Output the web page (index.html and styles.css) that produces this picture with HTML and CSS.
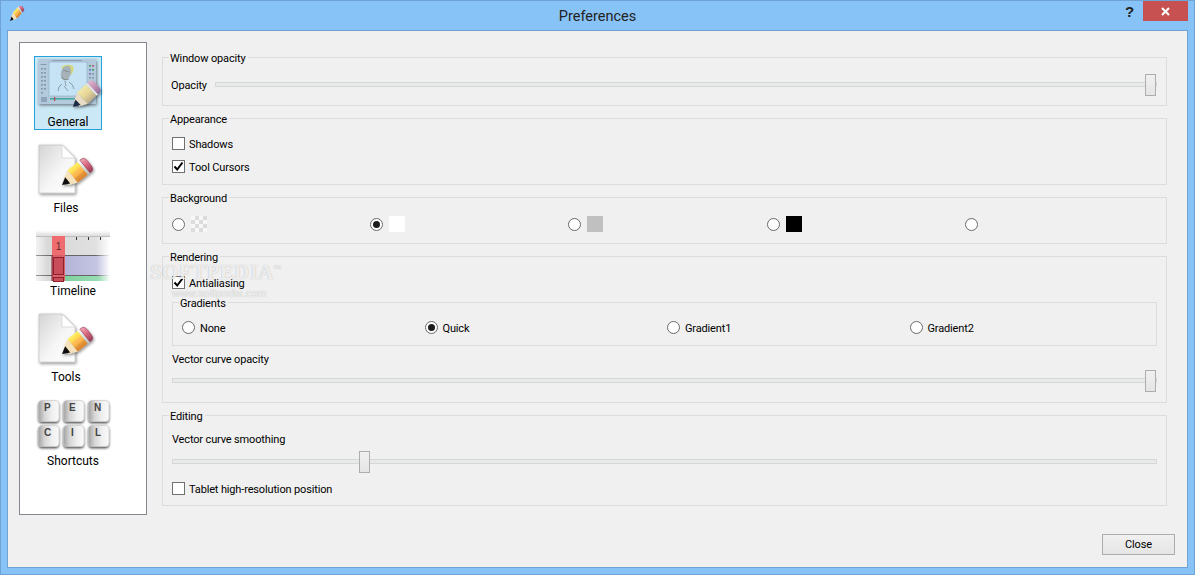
FILE: index.html
```html
<!DOCTYPE html>
<html lang="en">
<head>
<meta charset="utf-8">
<title>Preferences</title>
<link rel="stylesheet" href="styles.css">
</head>
<body>
<svg class="defs" aria-hidden="true">
  <defs>
    <linearGradient id="body" x1="0" y1="0" x2="0" y2="1">
      <stop offset="0" stop-color="#fff06a"/><stop offset=".33" stop-color="#ffd84a"/>
      <stop offset=".36" stop-color="#ffc45c"/><stop offset=".66" stop-color="#f9ae45"/>
      <stop offset=".69" stop-color="#e99a3c"/><stop offset="1" stop-color="#d9822c"/>
    </linearGradient>
    <linearGradient id="bodyPale" x1="0" y1="0" x2="0" y2="1">
      <stop offset="0" stop-color="#efe9a8"/><stop offset=".5" stop-color="#e6d596"/><stop offset="1" stop-color="#b9ab8a"/>
    </linearGradient>
    <linearGradient id="eraser" x1="0" y1="0" x2="0" y2="1">
      <stop offset="0" stop-color="#f0a8b8"/><stop offset=".5" stop-color="#d9667e"/><stop offset="1" stop-color="#983c56"/>
    </linearGradient>
    <linearGradient id="eraserPale" x1="0" y1="0" x2="0" y2="1">
      <stop offset="0" stop-color="#e0b4cc"/><stop offset=".5" stop-color="#c491b4"/><stop offset="1" stop-color="#8d6f97"/>
    </linearGradient>
    <linearGradient id="metal" x1="0" y1="0" x2="0" y2="1">
      <stop offset="0" stop-color="#fff"/><stop offset="1" stop-color="#bbb"/>
    </linearGradient>
    <linearGradient id="paper" x1="0" y1="0" x2="1" y2="1">
      <stop offset="0" stop-color="#d4d4d4"/><stop offset=".55" stop-color="#f6f6f6"/><stop offset="1" stop-color="#fff"/>
    </linearGradient>
    <linearGradient id="keyface" x1="0" y1="0" x2="1" y2="0">
      <stop offset="0" stop-color="#a2a2a2"/><stop offset=".3" stop-color="#d6d6d6"/><stop offset=".65" stop-color="#efefef"/><stop offset="1" stop-color="#fafafa"/>
    </linearGradient>
    <linearGradient id="fadeBlue" x1="0" y1="0" x2="1" y2="0">
      <stop offset="0" stop-color="#b4b4da"/><stop offset=".7" stop-color="#c4c4e2"/><stop offset="1" stop-color="#fff"/>
    </linearGradient>
    <linearGradient id="fadeGreen" x1="0" y1="0" x2="1" y2="0">
      <stop offset="0" stop-color="#7fd09e"/><stop offset=".75" stop-color="#9adcb4"/><stop offset="1" stop-color="#fff"/>
    </linearGradient>
    <linearGradient id="fadeRuler" x1="0" y1="0" x2="1" y2="0">
      <stop offset="0" stop-color="#f4f4f4"/><stop offset=".16" stop-color="#d8d8d8"/><stop offset=".8" stop-color="#e0e0e0"/><stop offset="1" stop-color="#fff"/>
    </linearGradient>
    <linearGradient id="fadeLine" x1="0" y1="0" x2="1" y2="0">
      <stop offset="0" stop-color="#999"/><stop offset=".2" stop-color="#666"/><stop offset=".8" stop-color="#666"/><stop offset="1" stop-color="#666" stop-opacity="0"/>
    </linearGradient>
    <linearGradient id="fadeTop" x1="0" y1="0" x2="0" y2="1">
      <stop offset="0" stop-color="#f2f2f2"/><stop offset="1" stop-color="#e0e0e0"/>
    </linearGradient>
    <linearGradient id="fadeTopWhite" x1="0" y1="0" x2="0" y2="1">
      <stop offset="0" stop-color="#fff"/><stop offset="1" stop-color="#fff" stop-opacity="0"/>
    </linearGradient>
    <filter id="soft" x="-30%" y="-30%" width="170%" height="170%">
      <feDropShadow dx="1" dy="1.5" stdDeviation="1.4" flood-color="#000" flood-opacity=".45"/>
    </filter>
    <filter id="keyshadow" x="-10%" y="-10%" width="120%" height="125%">
      <feDropShadow dx="0" dy="1.5" stdDeviation="1" flood-color="#000" flood-opacity=".7"/>
    </filter>
    <g id="pencil">
      <path d="M6 -3.5 15 -7 15 7 6 3.5Z" fill="#f5e2bd"/>
      <path d="M0 0 8 -3.5 8 3.5Z" fill="#0c0c0c"/>
      <rect x="15" y="-7" width="14" height="14" fill="url(#body)"/>
      <rect x="29" y="-7" width="3" height="14" fill="url(#metal)"/>
      <path d="M32 -7H34Q38 -7 38 -3V3Q38 7 34 7H32Z" fill="url(#eraser)" stroke="#8a3a52" stroke-width=".5"/>
    </g>
    <g id="pencilPale">
      <path d="M6 -3.5 15 -7 15 7 6 3.5Z" fill="#e8dcc6"/>
      <path d="M0 0 8 -3.5 8 3.5Z" fill="#1d2c44"/>
      <rect x="15" y="-7" width="14" height="14" fill="url(#bodyPale)"/>
      <rect x="29" y="-7" width="2.5" height="14" fill="#e4e8ec"/>
      <path d="M31.5 -7H34Q38 -7 38 -3V3Q38 7 34 7H31.5Z" fill="url(#eraserPale)"/>
    </g>
    <g id="page">
      <path d="M1 1H24L37 14V49H1Z" fill="url(#paper)" stroke="#bdbdbd" stroke-width=".6" filter="url(#soft)"/>
      <path d="M24 1V14H37Z" fill="#fff" stroke="#c9c9c9" stroke-width=".6"/>
    </g>
    <g id="key">
      <rect x=".5" y=".5" width="20.5" height="21" rx="3.5" fill="url(#keyface)" stroke="#c4c4c4" stroke-width=".6"/>
    </g>
  </defs>
</svg>

<div class="window">
  <header class="titlebar">
    <div class="title-left">
      <svg class="title-icon" width="16" height="16" viewBox="0 0 16 16"><use href="#pencil" transform="translate(0 15) scale(.44 .56) rotate(-41)"/></svg>
    </div>
    <div class="title-text">Preferences</div>
    <div class="title-right">
      <span class="help">?</span>
      <button class="close-x" aria-label="Close">
        <svg width="9" height="9" viewBox="0 0 9 9"><path d="M1 1 8 8M8 1 1 8" stroke="#fff" stroke-width="2"/></svg>
      </button>
    </div>
  </header>

  <div class="content">
    <div class="watermark"><span class="wm-big">SOFTPEDIA<sup class="wm-tm">™</sup></span><span class="wm-small">www.softpedia.com</span></div>
    <div class="main">
      <nav class="sidebar">
        <div class="nav-item selected">
          <svg width="60" height="54" viewBox="0 0 60 54">
            <rect x="0" y="0" width="58" height="45" rx="1.5" fill="#b3cadd" filter="url(#soft)"/>
            <rect x="11" y="3" width="38" height="34" fill="#c6e2f5" stroke="#90a9c0" stroke-width=".6"/>
            <g fill="#8498ab">
              <rect x="2.5" y="5" width="6" height="1"/><rect x="3" y="9" width="2" height="1.6"/><rect x="6" y="9" width="2" height="1.6"/>
              <rect x="3" y="13" width="2" height="1.6"/><rect x="6" y="13" width="2" height="1.6"/><rect x="3" y="17" width="2" height="1.6"/><rect x="6" y="17" width="2" height="1.6"/>
              <rect x="3" y="21" width="2" height="1.6"/><rect x="6" y="21" width="2" height="1.6"/><rect x="3" y="25" width="2" height="1.6"/><rect x="6" y="25" width="2" height="1.6"/>
              <rect x="3" y="29" width="2" height="1.6"/><rect x="6" y="29" width="2" height="1.6"/><rect x="3" y="33" width="2" height="1.6"/>
              <rect x="14" y="1" width="30" height=".8"/>
            </g>
            <rect x="51" y="6" width="2" height="1.6" fill="#4b9a6b"/><rect x="54" y="6" width="2" height="1.6" fill="#c05a7c"/>
            <rect x="51" y="10" width="2" height="1.6" fill="#5a7bc0"/><rect x="54" y="10" width="2" height="1.6" fill="#4b9a6b"/>
            <rect x="51" y="14" width="2" height="1.6" fill="#8a6cc0"/><rect x="54" y="14" width="2" height="1.6" fill="#8498ab"/>
            <rect x="51" y="18" width="2" height="1.6" fill="#8498ab"/><rect x="54" y="18" width="2" height="1.6" fill="#8498ab"/>
            <rect x="12" y="39" width="36" height="1.6" fill="#4aa8a0"/><rect x="16" y="38" width="1.2" height="4" fill="#b5475a"/>
            <rect x="3" y="38" width="6" height="5" fill="#8ea6bb"/>
            <path d="M23 8Q29 4 35 7 37 11 33 16L27 12Z" fill="#d6d97a"/>
            <ellipse cx="28" cy="14" rx="5" ry="7.5" transform="rotate(18 28 14)" fill="#a6b2b8"/>
            <path d="M24 18Q26 22 31 20M25 11 31 13M27 22 28 27M24 25Q20 27 20 32M31 23Q35 25 36 30M26 27 30 32" fill="none" stroke="#6f7c86" stroke-width=".7"/>
            <g filter="url(#soft)"><use href="#pencilPale" transform="translate(35 48) rotate(-43) scale(.86 1.1)"/></g>
          </svg>
          <span class="nav-label">General</span>
        </div>
        <div class="nav-item">
          <svg width="56" height="55" viewBox="0 0 56 55">
            <use href="#page"/>
            <g filter="url(#soft)"><use href="#pencil" transform="translate(24 41) rotate(-39) scale(.92 1.15)"/></g>
          </svg>
          <span class="nav-label">Files</span>
        </div>
        <div class="nav-item nav-wide">
          <svg width="74" height="52" viewBox="0 0 74 52">
            <rect x="0" y="6" width="74" height="45" fill="url(#fadeRuler)"/>
            <rect x="0" y="0" width="74" height="6" fill="url(#fadeTop)"/>
            <rect x="0" y="6" width="74" height="1" fill="#bdbdbd"/>
            <g fill="#333"><rect x="40" y="7" width="1" height="3"/><rect x="52" y="7" width="1" height="3"/><rect x="64" y="7" width="1" height="3"/></g>
            <rect x="29" y="26" width="45" height="19" fill="url(#fadeBlue)"/>
            <rect x="29" y="46" width="45" height="5" fill="url(#fadeGreen)"/>
            <rect x="0" y="25" width="74" height="1" fill="url(#fadeLine)"/><rect x="0" y="45" width="74" height="1" fill="url(#fadeLine)"/>
            <rect x="16" y="6" width="13" height="19" fill="#ee6c6e"/>
            <rect x="16" y="25" width="13" height="26" fill="#d8616a"/>
            <rect x="15.5" y="25" width="1" height="26" fill="#7d2230"/>
            <rect x="17.5" y="27.5" width="10" height="17" fill="#c84c59" stroke="#8e1f2c"/>
            <rect x="17.5" y="47.5" width="10" height="4" fill="#c84c59" stroke="#8e1f2c"/>
            <text class="ruler-num" x="22.5" y="20">1</text>
            <rect x="0" y="0" width="74" height="4" fill="url(#fadeTopWhite)"/>
          </svg>
          <span class="nav-label">Timeline</span>
        </div>
        <div class="nav-item">
          <svg width="56" height="55" viewBox="0 0 56 55">
            <use href="#page"/>
            <g filter="url(#soft)"><use href="#pencil" transform="translate(24 41) rotate(-39) scale(.92 1.15)"/></g>
          </svg>
          <span class="nav-label">Tools</span>
        </div>
        <div class="nav-item nav-wide">
          <svg width="74" height="53" viewBox="0 0 74 53">
            <g filter="url(#keyshadow)">
              <use href="#key" x="2" y="1"/><use href="#key" x="27" y="1"/><use href="#key" x="52" y="1"/>
              <use href="#key" x="2" y="26"/><use href="#key" x="27" y="26"/><use href="#key" x="52" y="26"/>
            </g>
            <text class="key" x="8" y="12">P</text><text class="key" x="33" y="12">E</text><text class="key" x="58" y="12">N</text>
            <text class="key" x="8" y="37">C</text><text class="key" x="35" y="37">I</text><text class="key" x="59" y="37">L</text>
          </svg>
          <span class="nav-label">Shortcuts</span>
        </div>
      </nav>

      <div class="panels">
        <section class="group">
          <div class="legend">Window opacity</div>
          <div class="opacity-row">
            <span class="opacity-label txt">Opacity</span>
            <div class="slider"><div class="groove"></div><div class="thumb"></div></div>
          </div>
        </section>

        <section class="group">
          <div class="legend">Appearance</div>
          <div class="appearance-list">
            <label class="option"><span class="check"></span><span class="txt">Shadows</span></label>
            <label class="option"><span class="check"><svg width="11" height="11" viewBox="0 0 11 11"><path d="M1.5 5.5 4.2 8.5 9.5 1.5" fill="none" stroke="#000" stroke-width="2"/></svg></span><span class="txt">Tool Cursors</span></label>
          </div>
        </section>

        <section class="group">
          <div class="legend">Background</div>
          <div class="bg-grid">
            <div class="bg-cell"><span class="radio"></span><span class="swatch swatch-checker"></span></div>
            <div class="bg-cell"><span class="radio on"></span><span class="swatch swatch-white"></span></div>
            <div class="bg-cell"><span class="radio"></span><span class="swatch swatch-gray"></span></div>
            <div class="bg-cell"><span class="radio"></span><span class="swatch swatch-black"></span></div>
            <div class="bg-cell"><span class="radio"></span></div>
          </div>
        </section>

        <section class="group">
          <div class="legend">Rendering</div>
          <label class="option antialias"><span class="check"><svg width="11" height="11" viewBox="0 0 11 11"><path d="M1.5 5.5 4.2 8.5 9.5 1.5" fill="none" stroke="#000" stroke-width="2"/></svg></span><span class="txt">Antialiasing</span></label>
          <div class="group subgroup">
            <div class="legend">Gradients</div>
            <div class="grad-grid">
              <label class="grad-cell"><span class="radio"></span><span class="txt">None</span></label>
              <label class="grad-cell"><span class="radio on"></span><span class="txt">Quick</span></label>
              <label class="grad-cell"><span class="radio"></span><span class="txt">Gradient1</span></label>
              <label class="grad-cell"><span class="radio"></span><span class="txt">Gradient2</span></label>
            </div>
          </div>
          <div class="field-label vco-label">Vector curve opacity</div>
          <div class="slider slider-inset slider-last"><div class="groove"></div><div class="thumb"></div></div>
        </section>

        <section class="group">
          <div class="legend">Editing</div>
          <div class="field-label vcs-label">Vector curve smoothing</div>
          <div class="slider slider-inset slider-smooth"><div class="groove"></div><div class="thumb thumb-smoothing"></div></div>
          <label class="option tablet"><span class="check"></span><span class="txt">Tablet high-resolution position</span></label>
        </section>
      </div>
    </div>
    <footer class="footer"><button class="btn">Close</button></footer>
  </div>
</div>
</body>
</html>
```

FILE: styles.css
```css
* { box-sizing: border-box; }
html, body { margin: 0; padding: 0; }
body {
  width: 1195px;
  height: 575px;
  overflow: hidden;
  font-family: "Roboto", "Liberation Sans", sans-serif;
  font-size: 11px;
  letter-spacing: -.15px;
  line-height: 16px;
  color: #000;
}
.defs { position: absolute; width: 0; height: 0; }
.txt { padding-top: 2px; }

.window {
  width: 1195px;
  height: 575px;
  background: #88c3f8;
  border: 1px solid #6fa3d3;
  padding: 0 6px 6px;
}

.titlebar {
  height: 29px;
  display: grid;
  grid-template-columns: 1fr auto 1fr;
}
.title-left { padding: 5px 0 0 3px; }
.title-icon { display: block; }
.title-text {
  font-size: 14.5px;
  letter-spacing: 0;
  line-height: 32px;
  color: #222;
}
.title-right { display: flex; justify-content: flex-end; align-items: flex-start; }
.help {
  font-family: "Liberation Sans", sans-serif;
  font-weight: 700;
  font-size: 15px;
  line-height: 21px;
  color: #222;
  margin-right: 9px;
}
.close-x {
  width: 45px;
  height: 20px;
  padding: 0;
  border: 0;
  background: #c75050;
  display: flex;
  align-items: center;
  justify-content: center;
}

.content {
  position: relative;
  height: 538px;
  background: #f0f0f0;
  border: 1px solid #6fa3d3;
  padding: 11px 12px 0 11px;
}

.watermark {
  position: absolute;
  left: 142px;
  top: 228px;
  display: flex;
  flex-direction: column;
  color: rgba(255, 255, 255, .8);
  text-shadow: 0 0 1px rgba(0, 0, 0, .3);
  pointer-events: none;
}
.wm-big {
  font-family: "Liberation Serif", serif;
  font-weight: 700;
  font-size: 21px;
  line-height: 26px;
  letter-spacing: .4px;
}
.wm-tm { font-size: 8px; line-height: 0; }
.wm-small {
  font-family: "Liberation Sans", sans-serif;
  font-size: 11px;
  letter-spacing: 0;
  line-height: 14px;
  margin: 1px 0 0 22px;
}

.main { display: flex; gap: 15px; height: 473px; margin-right: 8px; }

.sidebar {
  width: 128px;
  background: #fff;
  border: 1px solid #828790;
  padding: 13px 0 0 14px;
  display: flex;
  flex-direction: column;
  align-items: flex-start;
  gap: 11px;
}
.nav-item {
  display: flex;
  flex-direction: column;
  align-items: center;
  padding: 3px 4px 1px;
}
.nav-item svg { display: block; overflow: visible; }
.nav-wide { padding-left: 1px; padding-right: 1px; margin-left: 1px; }
.nav-item.selected {
  background: #cbe8f6;
  border: 1px solid #26a0da;
  padding: 2px 3px 0;
}
.nav-label {
  display: block;
  height: 16px;
  font-size: 12px;
  letter-spacing: 0;
  line-height: 18px;
}
.ruler-num { font: 400 10px "Liberation Sans", sans-serif; fill: #5c2a30; text-anchor: middle; letter-spacing: 0; }
.key { font: 700 10px "Liberation Sans", sans-serif; fill: #444; letter-spacing: 0; }

.panels {
  flex: 1;
  padding-top: 15px;
  display: flex;
  flex-direction: column;
  gap: 12px;
}
.group { border: 1px solid #dcdcdc; }
.legend {
  width: fit-content;
  height: 16px;
  margin: -8px 0 -1px 6px;
  padding: 0 2px 0 1px;
  background: #f0f0f0;
  line-height: 18px;
}

.opacity-row {
  display: flex;
  align-items: center;
  padding: 0 9px 10px 8px;
  margin-top: 9px;
}
.opacity-label { width: 44px; }

.slider { position: relative; height: 21px; flex: 1; }
.groove {
  position: absolute;
  left: 0;
  right: 0;
  top: 8px;
  height: 5px;
  background: #e8eae9;
  border: 1px solid #d6d8d7;
}
.thumb {
  position: absolute;
  top: 0;
  right: 1px;
  width: 11px;
  height: 22px;
  border: 1px solid #adadad;
  background: linear-gradient(#f0f0f0, #e5e5e5);
}
.thumb-smoothing { right: auto; left: 187px; }
.slider-inset { margin: 2px 9px 0; }
.slider-smooth { margin-top: 3px; }
.slider-last { margin-bottom: 11px; }

.option { display: flex; align-items: center; gap: 4px; height: 13px; margin-left: 9px; }
.check {
  width: 13px;
  height: 13px;
  background: #fff;
  border: 1px solid #707070;
  display: flex;
  align-items: center;
  justify-content: center;
  flex: none;
}
.radio {
  width: 13px;
  height: 13px;
  border-radius: 50%;
  background: #fff;
  border: 1px solid #6a6a6a;
  display: flex;
  align-items: center;
  justify-content: center;
  flex: none;
}
.radio.on::after {
  content: "";
  width: 7px;
  height: 7px;
  border-radius: 50%;
  background: #1c1c1c;
}

.appearance-list {
  display: flex;
  flex-direction: column;
  gap: 10px;
  padding: 11px 0 11px;
}

.bg-grid {
  display: grid;
  grid-template-columns: repeat(5, 198.2px);
  padding: 11px 0 11px 9px;
}
.bg-cell { display: flex; align-items: center; gap: 6px; height: 16px; }
.swatch { width: 16px; height: 16px; }
.swatch-checker {
  background: repeating-conic-gradient(#dcdcdc 0 25%, #f7f7f7 0 50%) 0 0 / 8px 8px;
}
.swatch-white { background: #fff; }
.swatch-gray { background: #c0c0c0; }
.swatch-black { background: #000; }

.antialias { margin-top: 12px; }
.subgroup { margin: 13px 9px 0; }
.grad-grid {
  display: grid;
  grid-template-columns: repeat(4, 242.5px);
  padding: 11px 0 11px 9px;
}
.grad-cell { display: flex; align-items: center; gap: 5px; height: 13px; }

.field-label { margin-left: 9px; height: 16px; }
.vco-label { margin-top: 6px; }
.vcs-label { margin-top: 9px; }
.tablet { margin-top: 10px; margin-bottom: 10px; }

.footer { display: flex; justify-content: flex-end; margin-top: 19px; }
.btn {
  width: 73px;
  height: 21px;
  padding: 1px 0 0;
  border: 1px solid #adadad;
  background: linear-gradient(#f0f0f0, #e5e5e5);
  font: inherit;
  letter-spacing: inherit;
  color: #000;
}
```
